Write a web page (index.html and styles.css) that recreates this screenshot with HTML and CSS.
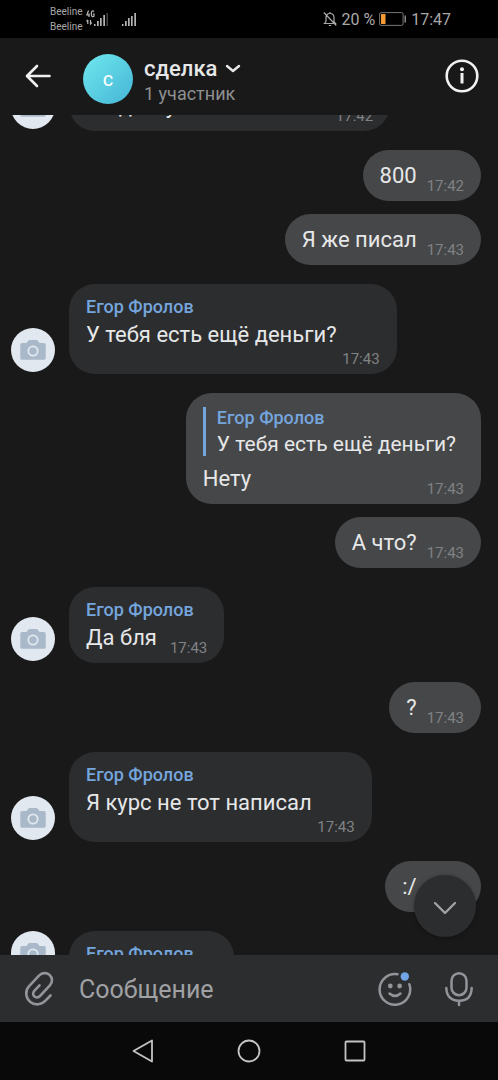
FILE: index.html
```html
<!DOCTYPE html>
<html lang="ru">
<head>
<meta charset="utf-8">
<meta name="viewport" content="width=device-width, initial-scale=1">
<title>сделка</title>
<link rel="stylesheet" href="styles.css">
</head>
<body>
<svg class="sprite" aria-hidden="true">
  <symbol id="camera" viewBox="0 0 26 20">
    <path fill="#a9b9c9" d="M2 3h4.500l1.500-2q.7-.9 1.800-.9h6.400q1.100 0 1.800.9l1.500 2H24q1.700 0 1.700 1.700v13.500q0 1.600-1.700 1.600H2Q.3 19.800.3 18.200V4.700Q.3 3 2 3z"/>
    <circle cx="13" cy="11" r="4.700" fill="#a9b9c9" stroke="#e2e8f0" stroke-width="1.800"/>
  </symbol>
</svg>
<div class="app">
  <div class="status">
    <div class="carriers"><span>Beeline</span><span>Beeline</span></div>
    <svg class="signal" width="50" height="18" viewBox="0 0 50 18" aria-hidden="true">
      <g fill="none" stroke="#bbb" stroke-width="1.200"><path d="M2.500.5L.8 5h3M3 3.500V7M8 1.500Q7 .5 6 1.200Q5.300 1.800 5.300 4T6.200 6.500Q7.500 7 8 6V4H6.800M1.800 10v4M.5 11.300L1.800 10M4.500 10v4l1.300-1.300"/></g>
      <g fill="#b4b4b4"><path d="M8 14h1.500v2H8zM11 11h1.700v5H11zM14 8h1.700v8H14zM17.300 5H19v11h-1.700zM36 14h1.500v2H36zM39 11h1.700v5H39zM42 8h1.700v8H42zM45 6h1.700v10H45zM48.300 3H50v13h-1.700z"/><path fill="#444" d="M20.500 3H22v13h-1.500z"/></g>
    </svg>
    <div class="status-right">
      <svg width="14" height="16" viewBox="0 0 14 16" fill="none" stroke="#aaa" stroke-width="1.200" aria-hidden="true"><path d="M1.500 12.500h11L11 10.500V6.500Q11 2.500 7 2.500T3 6.500v4zM5.800 14.500h2.400M7 1v1.500M.8 1.500l12.500 13"/></svg>
      <span>20 %</span>
      <svg class="battery" width="28" height="14" viewBox="0 0 28 14" aria-hidden="true"><rect x=".6" y=".6" width="23.500" height="12.800" rx="1.500" fill="none" stroke="#777"/><path fill="#f69a35" d="M2 2h4.500v10H2z"/><path fill="#888" d="M25.500 3.500H27v7h-1.500z"/></svg>
      <span>17:47</span>
    </div>
  </div>
  <header class="header">
    <button class="icon-button" aria-label="Назад"><svg width="26" height="24" viewBox="0 0 26 24" fill="none" stroke="#f0f0f0" stroke-width="2.600" stroke-linecap="round" stroke-linejoin="round"><path d="M12 2L2 12l10 10M2.500 12h22"/></svg></button>
    <div class="chat-avatar">с</div>
    <div class="chat-info">
      <h1 class="chat-title">сделка <svg width="16" height="10" viewBox="0 0 16 10" fill="none" stroke="#e8e8e8" stroke-width="2.400" stroke-linecap="round" stroke-linejoin="round" aria-hidden="true"><path d="M2 2l6 5 6-5"/></svg></h1>
      <p class="chat-members">1 участник</p>
    </div>
    <button class="icon-button" aria-label="Информация"><svg width="34" height="34" viewBox="0 0 34 34"><circle cx="17" cy="17" r="15.300" fill="none" stroke="#f2f2f2" stroke-width="2.600"/><circle cx="17" cy="10.300" r="2" fill="#f2f2f2"/><path d="M17 14v10.500" stroke="#f2f2f2" stroke-width="3"/></svg></button>
  </header>
  <main class="chat">
    <div class="messages">
      <div class="row">
        <div class="avatar"><svg><use href="#camera"/></svg></div>
        <div class="bubble bubble-named"><div class="name">Егор Фролов</div><div class="body"><p class="text">Не дам у меня столько</p><time class="time">17:42</time></div></div>
      </div>
      <div class="row row-out turn"><div class="bubble"><div class="body"><p class="text">800</p><time class="time">17:42</time></div></div></div>
      <div class="row row-out"><div class="bubble"><div class="body"><p class="text">Я же писал</p><time class="time">17:43</time></div></div></div>
      <div class="row turn">
        <div class="avatar"><svg><use href="#camera"/></svg></div>
        <div class="bubble bubble-named"><div class="name">Егор Фролов</div><div class="body body-stacked"><p class="text">У тебя есть ещё деньги?</p><time class="time">17:43</time></div></div>
      </div>
      <div class="row row-out turn"><div class="bubble bubble-reply"><blockquote class="quote"><div class="name">Егор Фролов</div><p class="quote-text">У тебя есть ещё деньги?</p></blockquote><div class="body"><p class="text">Нету</p><time class="time">17:43</time></div></div></div>
      <div class="row row-out"><div class="bubble"><div class="body"><p class="text">А что?</p><time class="time">17:43</time></div></div></div>
      <div class="row turn">
        <div class="avatar"><svg><use href="#camera"/></svg></div>
        <div class="bubble bubble-named"><div class="name">Егор Фролов</div><div class="body"><p class="text">Да бля</p><time class="time">17:43</time></div></div>
      </div>
      <div class="row row-out turn"><div class="bubble"><div class="body"><p class="text">?</p><time class="time">17:43</time></div></div></div>
      <div class="row turn">
        <div class="avatar"><svg><use href="#camera"/></svg></div>
        <div class="bubble bubble-named"><div class="name">Егор Фролов</div><div class="body body-stacked"><p class="text">Я курс не тот написал</p><time class="time">17:43</time></div></div>
      </div>
      <div class="row row-out turn"><div class="bubble"><div class="body"><p class="text">:/</p><time class="time">17:43</time></div></div></div>
      <div class="row row-partial turn">
        <div class="avatar"><svg><use href="#camera"/></svg></div>
        <div class="bubble bubble-named"><div class="name">Егор Фролов</div></div>
      </div>
    </div>
    <button class="scroll-down" aria-label="Вниз"><svg width="24" height="14" viewBox="0 0 24 14" fill="none" stroke="#a0a1a3" stroke-width="2.400" stroke-linecap="round" stroke-linejoin="round"><path d="M2 2l10 10L22 2"/></svg></button>
  </main>
  <form class="composer">
    <button type="button" class="icon-button" aria-label="Прикрепить"><svg width="30" height="36" viewBox="0 0 30 36" fill="none" stroke="#919499" stroke-width="2.600" stroke-linecap="round" stroke-linejoin="round"><path d="M26.500 24.500l-5 5.200c-4 4.200-10.500 5-15.200 1.200c-4.800-4-5.500-11-1.400-15.500L15 4.600c3-3.100 7.500-3.300 10.400-.8c3.300 2.900 3.400 7.500.5 10.600L16 25c-1.700 1.700-4.200 1.800-5.700.4s-1.600-3.800 0-5.500L15.500 14.300"/></svg></button>
    <input class="field" type="text" placeholder="Сообщение" aria-label="Сообщение">
    <button type="button" class="icon-button" aria-label="Смайлы"><svg width="34" height="36" viewBox="0 0 34 36" fill="none" stroke="#919499" stroke-width="2.500" stroke-linecap="round"><path d="M19.500 3.300A15.300 15.300 0 1 0 31.300 13.200"/><path d="M11.500 22.500q5.500 4.800 11 0"/><g stroke="none"><circle cx="12.300" cy="15" r="2.400" fill="#919499"/><circle cx="21.600" cy="15" r="2.400" fill="#919499"/><circle cx="26.800" cy="5.500" r="4.200" fill="#71a5e8"/></g></svg></button>
    <button type="button" class="icon-button" aria-label="Голосовое сообщение"><svg width="30" height="36" viewBox="0 0 30 36" fill="none" stroke="#919499" stroke-width="2.500" stroke-linecap="round"><rect x="7.500" y="2.200" width="15" height="22" rx="7.500"/><path d="M2.300 17Q2.800 29.500 15 29.700T27.700 17M15 30v4"/></svg></button>
  </form>
  <nav class="navbar">
    <button class="icon-button" aria-label="Назад"><svg width="22" height="24" viewBox="0 0 22 24" fill="none" stroke="#c4c4c4" stroke-width="1.800" stroke-linejoin="round"><path d="M1.500 12L20 1.500v21z"/></svg></button>
    <button class="icon-button" aria-label="Домой"><svg width="24" height="24" viewBox="0 0 24 24" fill="none" stroke="#c4c4c4" stroke-width="1.800"><circle cx="12" cy="12" r="10.500"/></svg></button>
    <button class="icon-button" aria-label="Недавние"><svg width="22" height="22" viewBox="0 0 22 22" fill="none" stroke="#c4c4c4" stroke-width="1.800"><rect x="1.500" y="1.500" width="19" height="19" rx="1"/></svg></button>
  </nav>
</div>
</body>
</html>
```

FILE: styles.css
```css
* { box-sizing: border-box; }

body {
  margin: 0;
  background: #000;
  color: #e6e7e8;
  font-family: Roboto, "Noto Sans", sans-serif;
}

h1, p, blockquote { margin: 0; }

svg { display: block; flex: none; }

.sprite { position: absolute; width: 0; height: 0; }

.icon-button {
  display: flex;
  flex: none;
  padding: 0;
  border: 0;
  background: none;
}

.app {
  display: flex;
  flex-direction: column;
  height: 100vh;
  background: #191919;
}

.status {
  display: flex;
  flex: none;
  align-items: center;
  height: 38px;
  padding: 0 47px 0 50px;
  background: #000;
  color: #a8a8a8;
}

.carriers {
  display: flex;
  flex-direction: column;
  font-size: 10px;
  line-height: 15px;
}

.signal { margin-left: 3px; }

.status-right {
  display: flex;
  align-items: center;
  gap: 4px;
  margin-left: auto;
  font-size: 16px;
}

.header {
  display: flex;
  flex: none;
  align-items: center;
  height: 77px;
  padding: 0 19px 2px 25px;
}

.chat-avatar {
  flex: none;
  width: 50px;
  height: 50px;
  margin: 6px 11px 0 32px;
  border-radius: 50%;
  background: linear-gradient(135deg, #6fe8ee, #45b5d6);
  color: #fff;
  font-size: 20px;
  line-height: 50px;
  text-align: center;
}

.chat-info { flex: 1; padding-top: 10px; }

.chat-title {
  display: flex;
  align-items: center;
  gap: 8px;
  font-size: 22px;
  font-weight: 500;
  line-height: 26px;
}

.chat-members {
  color: #8f9092;
  font-size: 18px;
  line-height: 24px;
}

.chat {
  position: relative;
  flex: 1;
  min-height: 0;
  overflow: hidden;
}

.messages {
  display: flex;
  flex-direction: column;
  margin-top: -60px;
  padding: 0 17px 0 11px;
}

.row {
  display: flex;
  align-items: flex-end;
  gap: 14px;
  margin-top: 13px;
}

.row:first-child { margin-top: 0; }
.row.turn { margin-top: 19px; }
.row-out { justify-content: flex-end; }

.avatar {
  display: flex;
  flex: none;
  align-items: center;
  justify-content: center;
  width: 44px;
  height: 44px;
  margin-bottom: 2px;
  border-radius: 50%;
  background: #e2e8f0;
}

.avatar svg { width: 26px; height: 20px; }

.bubble {
  padding: 13px 17px 6px;
  border-radius: 26px;
  background: #2c2d2f;
}

.row-out .bubble { background: #464749; }
.bubble-named { padding-top: 12px; }
.row-out .bubble-reply { padding-top: 14px; }

.row-partial { align-items: flex-start; }
.row-partial .bubble { min-width: 165px; min-height: 76px; }

.name {
  color: #75a5dd;
  font-size: 18px;
  font-weight: 500;
  line-height: 21px;
}

.bubble-named .name { margin-bottom: 5px; }

.body {
  display: flex;
  align-items: flex-end;
  justify-content: space-between;
  gap: 13px;
}

.row-out .body { gap: 10px; }

.text {
  padding-bottom: 7px;
  font-size: 22px;
  line-height: 25px;
}

.time {
  color: #818284;
  font-size: 15px;
  line-height: 18px;
}

.body-stacked {
  flex-direction: column;
  gap: 3px;
}

.body-stacked .text { padding: 0 43px 0 0; }

.quote {
  margin-bottom: 10px;
  padding: 0 8px 0 11px;
  border-left: 3px solid #75a5dd;
}

.quote-text {
  padding-top: 4px;
  font-size: 21px;
  line-height: 24px;
}

.scroll-down {
  position: absolute;
  right: 22px;
  bottom: 18px;
  display: flex;
  align-items: center;
  justify-content: center;
  width: 62px;
  height: 62px;
  padding: 4px 0 0;
  border: 0;
  border-radius: 50%;
  background: #2c2d2f;
  box-shadow: 0 1px 4px rgba(0, 0, 0, 0.3);
}

.composer {
  display: flex;
  flex: none;
  align-items: center;
  gap: 32px;
  height: 67px;
  padding: 0 24px;
  background: #2c2d2f;
}

.field {
  flex: 1;
  min-width: 0;
  margin-left: -7px;
  padding: 2px 0 0;
  border: 0;
  background: none;
  color: #e6e7e8;
  font: 25px/32px Roboto, "Noto Sans", sans-serif;
}

.field::placeholder { color: #a0a1a4; opacity: 1; }

.navbar {
  display: flex;
  flex: none;
  align-items: center;
  justify-content: center;
  gap: 83px;
  height: 58px;
  background: #090909;
}
```
